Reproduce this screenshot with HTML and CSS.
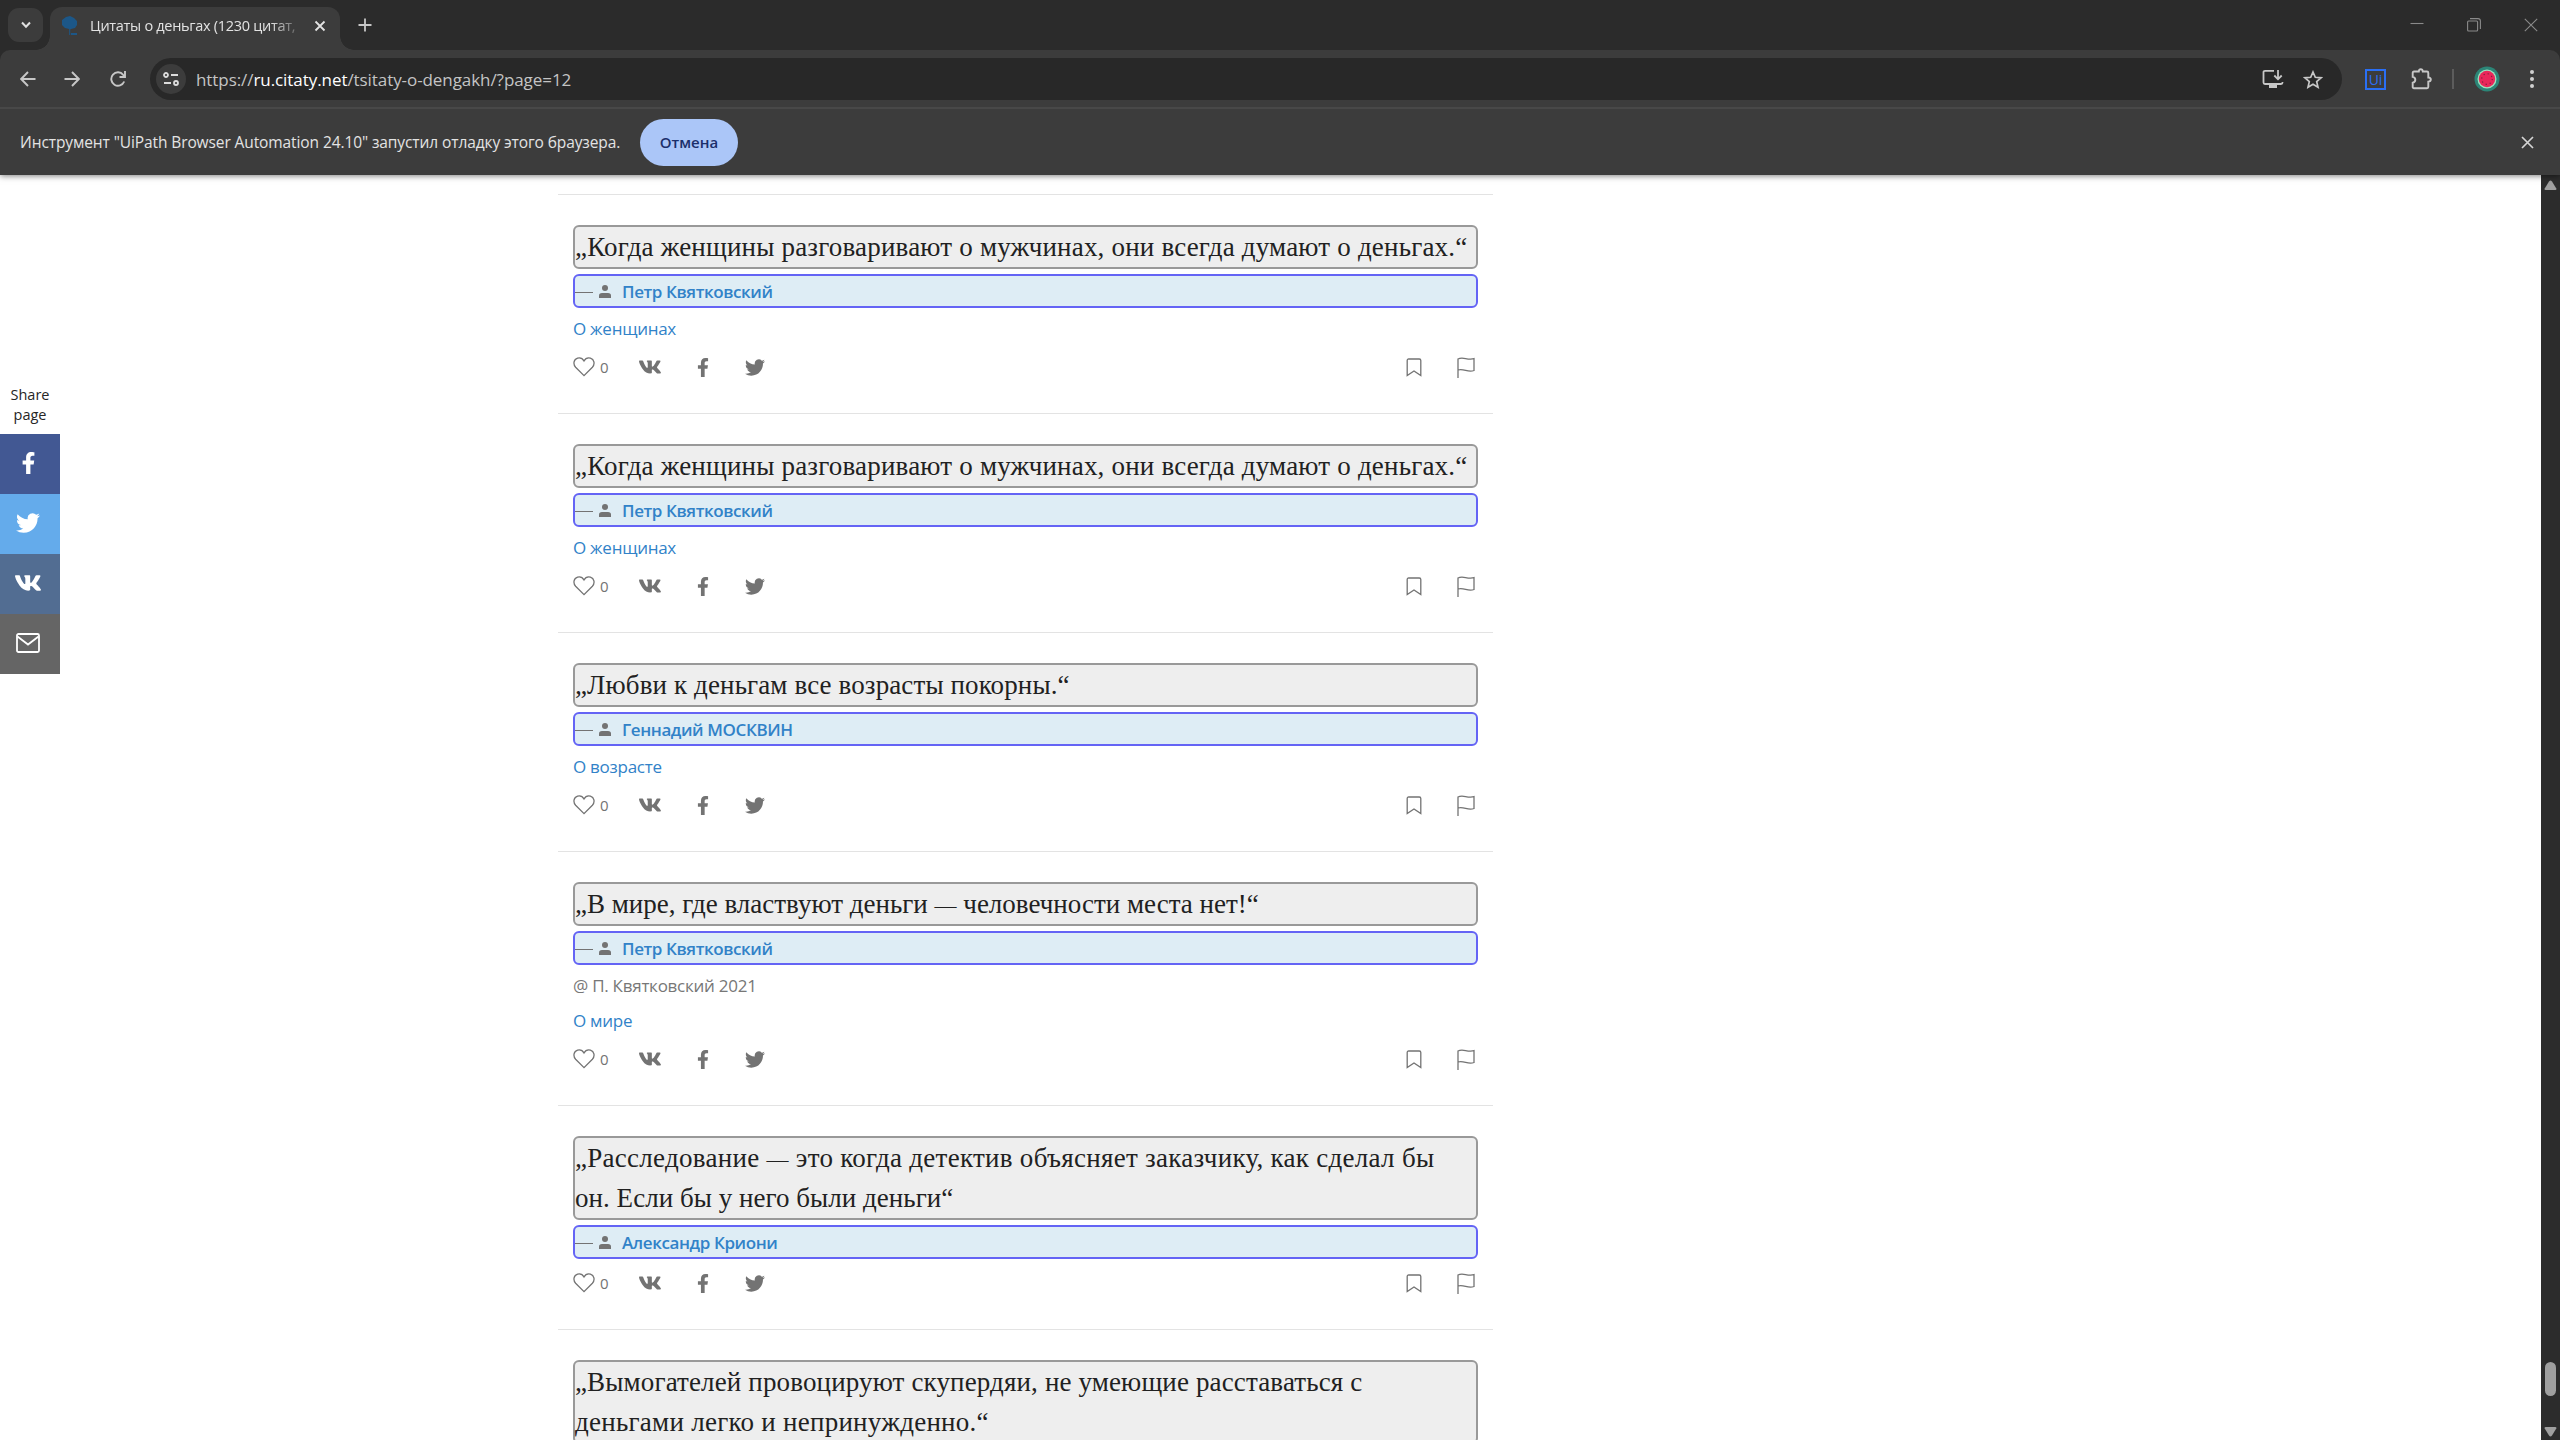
FILE: index.html
```html
<!DOCTYPE html>
<html lang="ru">
<head>
<meta charset="utf-8">
<title>Цитаты о деньгах</title>
<link rel="stylesheet" href="styles.css">
</head>
<body>
<svg width="0" height="0" class="defs">
  <symbol id="heart" viewBox="0 0 22 20"><path d="M11 18.6 2.6 10.2C-.2 7.2.7 2.3 4.6 1.1 7.300.4 9.700 1.600 11 4c1.300-2.400 3.700-3.600 6.400-2.900 3.900 1.200 4.800 6.100 2 9.100z" fill="none" stroke="currentColor" stroke-width="1.3"/></symbol>
  <symbol id="vk" viewBox="18 96 540 320"><path fill="currentColor" d="M545 117.7c3.700-12.500 0-21.700-17.800-21.700h-58.900c-15 0-21.900 7.900-25.600 16.700 0 0-30 73.100-72.400 120.500-13.700 13.700-20 18.100-27.500 18.100-3.700 0-9.400-4.400-9.400-16.900V117.700c0-15-4.200-21.700-16.600-21.700h-92.600c-9.400 0-15 7-15 13.500 0 14.200 21.200 17.500 23.400 57.500v86.800c0 19-3.400 22.500-10.900 22.500-20 0-68.600-73.400-97.400-157.400-5.800-16.300-11.500-22.900-26.600-22.900H38.800c-16.800 0-20.200 7.900-20.200 16.700 0 15.600 20 93.100 93.100 195.500C160.400 378.100 229 416 291.400 416c37.500 0 42.100-8.400 42.100-22.900 0-66.800-3.400-73.100 15.400-73.100 8.700 0 23.700 4.400 58.700 38.100 40 40 46.600 57.900 69 57.900h58.900c16.800 0 25.300-8.400 20.400-25-11.200-34.900-86.900-106.700-90.300-111.500-8.700-11.200-6.200-16.200 0-26.200.1-.1 72-101.300 79.400-135.600z"/></symbol>
  <symbol id="fb" viewBox="22 0 276 512"><path fill="currentColor" d="M279.140 288l14.220-92.660h-88.910v-60.130c0-25.350 12.420-50.060 52.240-50.060h40.420V6.260S260.430 0 225.360 0c-73.220 0-121.080 44.380-121.080 124.720v70.620H22.890V288h81.390v224h100.170V288z"/></symbol>
  <symbol id="tw" viewBox="0 2.200 24 19.600"><path fill="currentColor" d="M23.953 4.570a10 10 0 0 1-2.825.775 4.958 4.958 0 0 0 2.163-2.723c-.951.555-2.005.959-3.127 1.184a4.920 4.920 0 0 0-8.384 4.482C7.690 8.095 4.067 6.130 1.640 3.162a4.822 4.822 0 0 0-.666 2.475c0 1.710.87 3.213 2.188 4.096a4.904 4.904 0 0 1-2.228-.616v.06a4.923 4.923 0 0 0 3.946 4.827 4.996 4.996 0 0 1-2.212.085 4.936 4.936 0 0 0 4.604 3.417 9.867 9.867 0 0 1-6.102 2.105c-.39 0-.779-.023-1.170-.067a13.995 13.995 0 0 0 7.557 2.209c9.053 0 13.998-7.496 13.998-13.985 0-.21 0-.42-.015-.63A9.935 9.935 0 0 0 24 4.590z"/></symbol>
  <symbol id="mark" viewBox="0 0 16 19"><path d="M1.200 17.500V2.500Q1.200 1 2.700 1h10.600q1.500 0 1.500 1.500v15L8 13z" fill="none" stroke="currentColor" stroke-width="1.300"/></symbol>
  <symbol id="flag" viewBox="0 0 18 21"><path d="M1 21V2C6-.8 10 3.500 17 1.700v11.800c-6 2.500-10-2.300-16-.5" fill="none" stroke="currentColor" stroke-width="1.300"/></symbol>
  <symbol id="person" viewBox="0 0 12 13"><circle cx="6" cy="3" r="3" fill="currentColor"/><path d="M0 13v-2.500Q0 8 3 8h6q3 0 3 2.500V13z" fill="currentColor"/></symbol>
  <symbol id="mail" viewBox="0 0 24 20"><rect x="1" y="1" width="22" height="18" rx="1.500" fill="none" stroke="currentColor" stroke-width="1.800"/><path d="M1.500 3.500 12 11.500l10.500-8" fill="none" stroke="currentColor" stroke-width="1.800"/></symbol>
</svg>

<header class="browser">
  <div class="tabstrip">
    <button class="tab-search"><svg width="10" height="8" viewBox="0 0 10 8"><path d="M1 1.500 5 5.800l4-4.300" fill="none" stroke="#e0e0e0" stroke-width="2"/></svg></button>
    <div class="tab">
      <svg class="favicon" width="17" height="20" viewBox="0 0 17 20"><path fill="#1c5788" d="M5 1 9 0l4 2 3 3v4l-2 3-4 1-.8.500V19h-1v-6L4 12 1 9V4zM10 17h6v2h-6z"/></svg>
      <span class="tab-title">Цитаты о деньгах (1230 цитат,</span>
      <svg class="tab-close" width="12" height="12" viewBox="0 0 12 12"><path d="m1.500 1.500 9 9m0-9-9 9" stroke="#e3e3e3" stroke-width="1.800"/></svg>
    </div>
    <svg class="new-tab" width="14" height="14" viewBox="0 0 14 14"><path d="M7 .5v13M.5 7h13" stroke="#c7c7c7" stroke-width="1.800"/></svg>
    <div class="window-buttons">
      <svg width="14" height="14" viewBox="0 0 14 14"><path d="M.5 5.500h13"/></svg>
      <svg width="14" height="14" viewBox="0 0 14 14"><rect x=".6" y="3" width="10" height="10" rx="1"/><path d="M3 .6h8Q13.400.6 13.400 3v8"/></svg>
      <svg width="14" height="14" viewBox="0 0 14 14"><path d="m.8.800 12.400 12.400m0-12.400L.8 13.200"/></svg>
    </div>
  </div>
  <div class="toolbar-back">
    <div class="toolbar">
      <svg class="nav back" width="16" height="16" viewBox="0 0 16 16"><path d="M15.500 8H1.500M8 1 1.200 8 8 15"/></svg>
      <svg class="nav forward" width="16" height="16" viewBox="0 0 16 16"><path d="M.5 8h14M8 1l6.800 7L8 15"/></svg>
      <svg class="nav reload" width="16" height="16" viewBox="0 0 16 16"><path d="M14.200 10.500A6.700 6.700 0 1 1 13.200 3.800L15 5.700M15 0v6H9.500"/></svg>
      <div class="omnibox">
        <span class="site-info"><svg width="16" height="14" viewBox="0 0 16 14"><g fill="none" stroke="#dcdcdc" stroke-width="1.800"><circle cx="3" cy="3" r="2"/><path d="M8 3h7M1 11h7"/><circle cx="13" cy="11" r="2"/></g></svg></span>
        <span class="url">https://<b>ru.citaty.net</b>/tsitaty-o-dengakh/?page=12</span>
        <svg class="install" width="22" height="20" viewBox="0 0 22 20"><path d="M12 1.800H3Q1.500 1.800 1.500 3v10.500Q1.500 15 3 15h16q1.500 0 1.500-1.500V13M16 1v9M12.300 6.500 16 10.300l3.700-3.800" fill="none" stroke="#c7c7c7" stroke-width="1.800"/><path d="M7 15h8v4H7z" fill="#c7c7c7"/></svg>
        <svg class="star" width="20" height="19" viewBox="0 0 20 19"><path d="m10 2 2.300 5.300 5.700.5-4.300 3.800 1.300 5.600-5-3-5 3 1.300-5.600L2 7.800l5.700-.5z" fill="none" stroke="#c7c7c7" stroke-width="1.700"/></svg>
      </div>
      <span class="ui-ext"><span>Ui</span></span>
      <svg class="puzzle" width="21" height="22" viewBox="0 0 21 22"><path d="M3 3.500h4.800Q8 1.200 9.800 1.200t2 2.300H16Q17.300 3.500 17.300 5v4.500q2.500.2 2.500 2.100t-2.500 2.100v5q0 1.500-1.300 1.500H3Q1.700 20.200 1.700 19v-4.300q2.600-.4 2.600-2.900t-2.600-2.900V5Q1.700 3.500 3 3.500z" fill="none" stroke="#c7c7c7" stroke-width="1.900"/></svg>
      <span class="sep"></span>
      <svg class="avatar" width="26" height="26" viewBox="0 0 26 26"><circle cx="13" cy="13" r="12.500" fill="#2c8577"/><circle cx="13" cy="13" r="9.500" fill="#9fe3c0"/><circle cx="13" cy="13" r="8.200" fill="#e9275a"/><circle cx="13" cy="13" r="5.300" fill="none" stroke="#80203f" stroke-width="1.200" stroke-dasharray="1.200 2.963"/></svg>
      <svg class="dots" width="4" height="18" viewBox="0 0 4 18"><g fill="#d0d0d0"><circle cx="2" cy="2" r="2"/><circle cx="2" cy="9" r="2"/><circle cx="2" cy="16" r="2"/></g></svg>
    </div>
  </div>
  <div class="infobar">
    <span class="info-text">Инструмент "UiPath Browser Automation 24.10" запустил отладку этого браузера.</span>
    <button class="cancel">Отмена</button>
    <svg class="info-close" width="13" height="13" viewBox="0 0 13 13"><path d="m1 1 11 11m0-11L1 12" stroke="#d5d5d5" stroke-width="1.700"/></svg>
  </div>
</header>

<div class="viewport">
  <main class="page">
    <aside class="share">
      <p>Share<br>page</p>
      <a class="s-fb"><svg width="13" height="22"><use href="#fb"/></svg></a>
      <a class="s-tw"><svg width="24" height="20"><use href="#tw"/></svg></a>
      <a class="s-vk"><svg width="26" height="16"><use href="#vk"/></svg></a>
      <a class="s-mail"><svg width="24" height="20"><use href="#mail"/></svg></a>
    </aside>
    <section class="quotes">
      <article class="quote">
        <blockquote><span class="l1">„Когда женщины разговаривают о мужчинах, они всегда думают о деньгах.“</span></blockquote>
        <div class="author"><i></i><svg width="12" height="13"><use href="#person"/></svg><a>Петр Квятковский</a></div>
        <div class="tag"><a>О женщинах</a></div>
        <div class="actions"><svg class="heart" width="22" height="20"><use href="#heart"/></svg><span>0</span><svg class="vk" width="22" height="14"><use href="#vk"/></svg><svg class="fb" width="12" height="19"><use href="#fb"/></svg><svg class="tw" width="20" height="17"><use href="#tw"/></svg><svg class="mark" width="16" height="19"><use href="#mark"/></svg><svg class="flag" width="18" height="21"><use href="#flag"/></svg></div>
      </article>
      <article class="quote">
        <blockquote><span class="l1">„Когда женщины разговаривают о мужчинах, они всегда думают о деньгах.“</span></blockquote>
        <div class="author"><i></i><svg width="12" height="13"><use href="#person"/></svg><a>Петр Квятковский</a></div>
        <div class="tag"><a>О женщинах</a></div>
        <div class="actions"><svg class="heart" width="22" height="20"><use href="#heart"/></svg><span>0</span><svg class="vk" width="22" height="14"><use href="#vk"/></svg><svg class="fb" width="12" height="19"><use href="#fb"/></svg><svg class="tw" width="20" height="17"><use href="#tw"/></svg><svg class="mark" width="16" height="19"><use href="#mark"/></svg><svg class="flag" width="18" height="21"><use href="#flag"/></svg></div>
      </article>
      <article class="quote">
        <blockquote><span class="l3">„Любви к деньгам все возрасты покорны.“</span></blockquote>
        <div class="author"><i></i><svg width="12" height="13"><use href="#person"/></svg><a>Геннадий МОСКВИН</a></div>
        <div class="tag"><a>О возрасте</a></div>
        <div class="actions"><svg class="heart" width="22" height="20"><use href="#heart"/></svg><span>0</span><svg class="vk" width="22" height="14"><use href="#vk"/></svg><svg class="fb" width="12" height="19"><use href="#fb"/></svg><svg class="tw" width="20" height="17"><use href="#tw"/></svg><svg class="mark" width="16" height="19"><use href="#mark"/></svg><svg class="flag" width="18" height="21"><use href="#flag"/></svg></div>
      </article>
      <article class="quote">
        <blockquote><span class="l4">„В мире, где властвуют деньги <em>—</em> человечности места нет!“</span></blockquote>
        <div class="author"><i></i><svg width="12" height="13"><use href="#person"/></svg><a>Петр Квятковский</a></div>
        <div class="tag note"><span>@ П. Квятковский 2021</span></div>
        <div class="tag"><a>О мире</a></div>
        <div class="actions"><svg class="heart" width="22" height="20"><use href="#heart"/></svg><span>0</span><svg class="vk" width="22" height="14"><use href="#vk"/></svg><svg class="fb" width="12" height="19"><use href="#fb"/></svg><svg class="tw" width="20" height="17"><use href="#tw"/></svg><svg class="mark" width="16" height="19"><use href="#mark"/></svg><svg class="flag" width="18" height="21"><use href="#flag"/></svg></div>
      </article>
      <article class="quote">
        <blockquote><span class="l5">„Расследование <em>—</em> это когда детектив объясняет заказчику, как сделал бы</span><br><span class="l5b">он. Если бы у него были деньги“</span></blockquote>
        <div class="author"><i></i><svg width="12" height="13"><use href="#person"/></svg><a>Александр Криони</a></div>
        <div class="actions"><svg class="heart" width="22" height="20"><use href="#heart"/></svg><span>0</span><svg class="vk" width="22" height="14"><use href="#vk"/></svg><svg class="fb" width="12" height="19"><use href="#fb"/></svg><svg class="tw" width="20" height="17"><use href="#tw"/></svg><svg class="mark" width="16" height="19"><use href="#mark"/></svg><svg class="flag" width="18" height="21"><use href="#flag"/></svg></div>
      </article>
      <article class="quote">
        <blockquote><span class="l6">„Вымогателей провоцируют скупердяи, не умеющие расставаться с</span><br><span class="l6b">деньгами легко и непринужденно.“</span></blockquote>
      </article>
    </section>
  </main>
  <div class="scrollbar">
    <svg width="13" height="11" viewBox="0 0 13 11"><path d="M6.500.5Q7.300.5 8 1.500l4.300 7q.7 1.500-1 1.500H1.700q-1.700 0-1-1.500l4.300-7Q5.700.5 6.500.5z" fill="#9f9f9f"/></svg>
    <span class="thumb"></span>
    <svg class="down" width="13" height="11" viewBox="0 0 13 11"><path d="M6.500.5Q7.300.5 8 1.500l4.300 7q.7 1.500-1 1.500H1.700q-1.700 0-1-1.500l4.300-7Q5.700.5 6.500.5z" fill="#9f9f9f"/></svg>
  </div>
</div>
</body>
</html>
```
FILE: styles.css
```css
* { box-sizing: border-box; }
body {
  margin: 0;
  height: 1440px;
  overflow: hidden;
  display: flex;
  flex-direction: column;
  background: #fff;
  font-family: "Open Sans", "Noto Sans", sans-serif;
}
.defs { position: absolute; }
svg { display: block; flex: none; }
button { border: 0; padding: 0; font: inherit; }

/* browser chrome */
.browser { position: relative; z-index: 1; flex: none; background: #3c3c3c; box-shadow: 0 1px 6px rgba(0, 0, 0, .5); }
.tabstrip { display: flex; height: 50px; background: #2b2b2b; padding-left: 8px; }
.tab-search { display: grid; place-items: center; width: 35px; height: 34px; margin-top: 8px; border-radius: 11px; background: #3c3c3c; }
.tab { position: relative; display: flex; align-items: center; width: 290px; height: 43px; margin: 7px 0 0 7px; padding: 0 14px 6px 11px; border-radius: 12px 12px 0 0; background: #3c3c3c; }
.tab::before, .tab::after { content: ""; position: absolute; bottom: 0; width: 14px; height: 14px; }
.tab::before { left: -14px; background: radial-gradient(circle at 0 0, transparent 13.5px, #3c3c3c 14px); }
.tab::after { right: -14px; background: radial-gradient(circle at 100% 0, transparent 13.5px, #3c3c3c 14px); }
.tab-title { margin-left: 12px; font-size: 14.5px; letter-spacing: -.3px; color: #e3e3e3; white-space: nowrap; -webkit-mask: linear-gradient(90deg, #000 88%, rgba(0, 0, 0, .3)); mask: linear-gradient(90deg, #000 88%, rgba(0, 0, 0, .3)); }
.tab-close { margin-left: auto; }
.new-tab { margin: 18px 0 0 18px; }
.window-buttons { display: flex; gap: 43px; margin: 18px 22px 0 auto; }
.window-buttons svg { fill: none; stroke: #8a8a8a; stroke-width: 1.1; }
.toolbar-back { background: #2b2b2b; }
.toolbar { display: flex; align-items: center; height: 57px; padding-left: 20px; border-radius: 10px 10px 0 0; background: #3c3c3c; }
.nav { fill: none; stroke: #c7c7c7; stroke-width: 1.9; }
.back { margin-right: 28px; }
.forward { margin-right: 30px; }
.reload { margin-right: 24px; }
.omnibox { display: flex; align-items: center; width: 2192px; height: 42px; margin-top: 1px; padding-left: 6px; border-radius: 21px; background: #282828; }
.site-info { display: grid; place-items: center; width: 30px; height: 30px; border-radius: 50%; background: #3c3c3c; }
.url { margin-left: 10px; font-size: 17px; letter-spacing: -.07px; color: #c4c4c4; white-space: nowrap; }
.url b { font-weight: 400; color: #fff; }
.install { margin-left: auto; }
.star { margin: 0 19px; }
.ui-ext { display: grid; place-items: center; width: 21px; height: 21px; margin: 2px 0 0 23px; border: 2px solid #2a6ff5; }
.ui-ext span { font-size: 14px; line-height: 15px; color: #2a6ff5; }
.puzzle { margin-left: 25px; }
.sep { width: 2px; height: 20px; margin-left: 20px; background: #5c5c5c; }
.avatar { margin-left: 20px; }
.dots { margin-left: 30px; }
.infobar { display: flex; align-items: center; height: 68px; padding: 0 26px 0 20px; border-top: 2px solid #484848; }
.info-text { width: 620px; font-size: 15.5px; letter-spacing: -.1px; color: #e3e3e3; white-space: nowrap; }
.cancel { width: 98px; height: 47px; border-radius: 24px; background: #abc6f8; color: #1b2f6b; font-size: 15px; font-weight: 600; }
.info-close { margin-left: auto; }

/* page */
.viewport { display: flex; flex: 1; min-height: 0; }
.page { display: flex; flex: 1; min-width: 0; overflow: hidden; }
.share { width: 60px; flex: none; padding-top: 210px; text-align: center; color: #262626; }
.share p { margin: 0; height: 49px; font-size: 14.5px; line-height: 20px; }
.share a { display: grid; place-items: center; height: 60px; padding: 0 4px 2px 0; color: #fff; }
.s-fb { background: #425893; }
.s-tw { background: #64abeb; }
.s-vk { background: #526d92; }
.s-mail { background: #656565; }
.quotes { width: 935px; flex: none; margin-left: 498px; padding-top: 19px; }
.quote { border-top: 1px solid #e3e3e3; padding: 30px 15px 0; }
blockquote { margin: 0; border: 2px solid #999; border-radius: 6px; background: #eee; font: 27px/40px "Liberation Serif", serif; color: #212121; white-space: nowrap; }
blockquote em { font-size: 22px; font-style: normal; line-height: 1; }
.l1 { letter-spacing: .19px; }
.l3 { letter-spacing: .12px; }
.l5 { letter-spacing: .28px; }
.l5b { letter-spacing: .04px; }
.l6 { letter-spacing: .14px; }
.l6b { letter-spacing: .26px; }
.author { display: flex; align-items: center; height: 34px; margin-top: 5px; border: 2px solid #6464f5; border-radius: 6px; background: #deedf5; font-size: 17px; font-weight: 600; letter-spacing: -.4px; color: #3182c8; }
.author i { width: 18px; height: 1px; margin-top: 3px; background: #737373; }
.author svg { margin: 1px 11px 0 6px; color: #737373; }
.tag { height: 35px; padding-top: 6px; font-size: 17px; line-height: 29px; letter-spacing: -.26px; color: #3182c8; }
.note { color: #777; }
.actions { display: flex; align-items: center; height: 70px; padding-bottom: 22px; color: #737373; font-size: 15px; }
.actions span { width: 9px; margin: 0 30px 0 5px; }
.fb { margin-left: 36px; }
.tw { margin-left: 36px; }
.mark { margin-left: auto; }
.flag { margin: 0 3px 0 35px; }

/* scrollbar */
.scrollbar { display: flex; flex-direction: column; align-items: center; width: 19px; flex: none; padding: 5px 0 3px; background: #2c2c2c; }
.thumb { width: 11px; height: 34px; margin-top: auto; border-radius: 6px; background: #9f9f9f; }
.down { margin-top: 30px; transform: rotate(180deg); }
```
